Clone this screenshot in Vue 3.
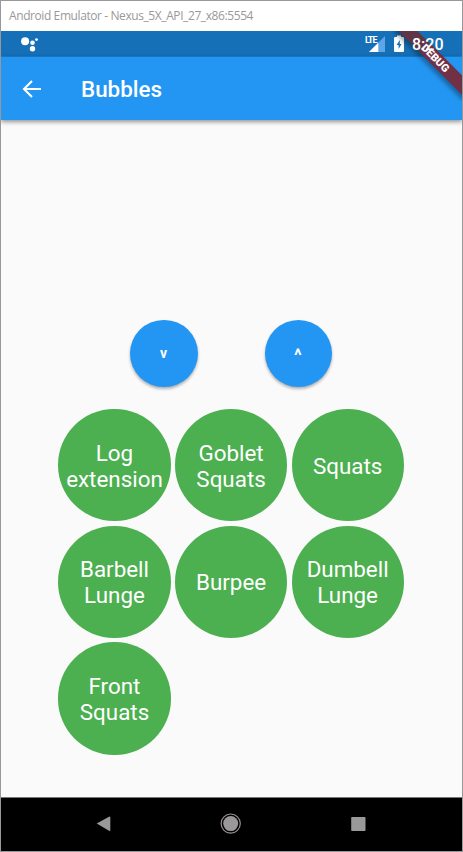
<script setup>
const rows = [
  [['Log', 'extension'], ['Goblet', 'Squats'], ['Squats']],
  [['Barbell', 'Lunge'], ['Burpee'], ['Dumbell', 'Lunge']],
  [['Front', 'Squats']],
]
const bubbles = rows.flat()
</script>

<template>
  <div class="window">
    <div class="titlebar"><span>Android Emulator - Nexus_5X_API_27_x86:5554</span></div>
    <div class="screen">
      <header class="statusbar">
        <svg class="assistant" width="18" height="16" viewBox="0 0 18 16" fill="#fff">
          <circle cx="4.1" cy="4.2" r="4" />
          <circle cx="11.5" cy="5.8" r="2.3" />
          <circle cx="11.5" cy="11.8" r="2.7" />
          <circle cx="15.5" cy="2.6" r="1.4" />
        </svg>
        <div class="signal">
          <svg width="22" height="18" viewBox="0 0 22 18">
            <path d="M20 1V17H4Z" fill="#5ba5e8" />
            <path d="M13.3 7.7V17H4Z" fill="#fff" />
          </svg>
          <span class="lte">LTE</span>
        </div>
        <svg class="battery" width="10" height="17" viewBox="0 0 10 17">
          <path d="M3 .5H7V2H9Q10 2 10 3V16Q10 17 9 17H1Q0 17 0 16V3Q0 2 1 2H3Z" fill="#fff" />
          <path d="M5.8 4.9L2.6 10H4.6V14L7.5 9H5.8Z" fill="#1670b8" />
        </svg>
        <time>8:20</time>
      </header>
      <nav class="appbar">
        <svg width="20" height="18" viewBox="0 0 20 18" fill="none" stroke="#fff" stroke-width="2.1">
          <path d="M19 9H2M10 1L2 9L10 17" />
        </svg>
        <h1>Bubbles</h1>
      </nav>
      <main>
        <div class="controls">
          <button class="round">v</button>
          <button class="round caret">^</button>
        </div>
        <div class="bubbles">
          <div v-for="(lines, i) in bubbles" :key="i" class="bubble">
            <span v-for="line in lines" :key="line">{{ line }}</span>
          </div>
        </div>
      </main>
      <footer>
        <svg width="461" height="53" viewBox="0 0 461 53">
          <path d="M95.7 25.5L108 18.7Q109.3 18.2 109.3 19.5V32Q109.3 33.5 108 32.8Z" fill="#999" />
          <circle cx="229.7" cy="25.6" r="9.6" fill="none" stroke="#9a9090" stroke-width="1.2" />
          <circle cx="229.7" cy="25.6" r="7.5" fill="#999" />
          <rect x="350.2" y="19" width="14.3" height="14" rx=".7" fill="#999" />
        </svg>
      </footer>
      <svg class="ribbon" width="70" height="70" viewBox="0 0 70 70">
        <defs>
          <filter id="soft" x="-20%" y="-20%" width="140%" height="140%"><feGaussianBlur stdDeviation="2.3" /></filter>
        </defs>
        <path d="M6 -5L76 65" stroke="#000" stroke-opacity=".32" stroke-width="14" filter="url(#soft)" />
        <path d="M10 -6L80 64" stroke="#5f3547" stroke-width="13.4" />
        <path d="M34 18L80 64" stroke="#723047" stroke-width="13.4" />
        <text transform="translate(43.5 26.8) rotate(45)" text-anchor="middle" y="4">DEBUG</text>
      </svg>
    </div>
  </div>
</template>

<style>
body { background: #949498; }
</style>

<style scoped>
.window {
  position: relative;
  box-sizing: border-box;
  width: 463px;
  height: 852px;
  border: 1px solid #98989c;
  background: #fff;
  overflow: hidden;
  font-family: Roboto, sans-serif;
}
.titlebar {
  height: 30px;
  box-sizing: border-box;
  padding: 6px 0 0 8px;
  background: #fff;
  color: #999;
  font: 12px/18px "Open Sans", sans-serif;
  letter-spacing: -.41px;
  white-space: nowrap;
}
.screen { position: relative; display: flex; flex-direction: column; height: 820px; }
.statusbar {
  display: flex;
  align-items: flex-start;
  height: 26px;
  box-sizing: border-box;
  padding-left: 20px;
  background: #1670b8;
  border-bottom: 1px solid #1c80d0;
}
.assistant { margin-top: 6px; }
.signal { position: relative; width: 22px; height: 18px; margin: 4px 0 0 326px; }
.lte {
  position: absolute;
  left: 0;
  top: 1px;
  font: 700 9px/9px Roboto, sans-serif;
  letter-spacing: -1px;
  color: #fff;
}
.battery { margin: 4px 0 0 7px; }
time {
  position: relative;
  z-index: 2;
  margin: 4px 0 0 8px;
  font-size: 16px;
  line-height: 19px;
  font-weight: 500;
  color: #fff;
}
.appbar {
  position: relative;
  display: flex;
  align-items: center;
  height: 63px;
  padding-left: 21px;
  background: #2396f3;
  box-shadow: 0 2px 4px rgba(0, 0, 0, .32), 0 1px 6px rgba(0, 0, 0, .15);
}
h1 { margin: 0 0 0 39px; color: #fff; font-size: 22.4px; line-height: 26px; font-weight: 500; }
main { flex: 1; background: #fafafa; padding: 199.7px 0 0 57.4px; }
.controls { display: flex; gap: 67px; padding-left: 71.8px; }
.round {
  width: 67.5px;
  height: 67.5px;
  padding: 0 1px 1px 0;
  border: 0;
  border-radius: 50%;
  background: #2396f3;
  box-shadow: 0 2px 3px rgba(0, 0, 0, .3);
  color: #fff;
  font: 700 14px/16px Roboto, sans-serif;
}
.round.caret { padding: 5px 1px 0 0; font-size: 17.5px; }
.bubbles { display: grid; grid-template-columns: repeat(3, 112.2px); gap: 4.4px; margin-top: 22px; }
.bubble {
  display: flex;
  flex-direction: column;
  align-items: center;
  justify-content: center;
  height: 112.2px;
  box-sizing: border-box;
  padding-top: .6px;
  border-radius: 50%;
  background: #4caf50;
  color: #fff;
  font-size: 22.4px;
  line-height: 26px;
}
footer { height: 53px; border-top: 1px solid #777; background: #000; }
footer svg { display: block; }
.ribbon { position: absolute; right: 0; top: 0; }
.ribbon text { font: 900 10.8px Roboto, sans-serif; fill: #fff; }
</style>
